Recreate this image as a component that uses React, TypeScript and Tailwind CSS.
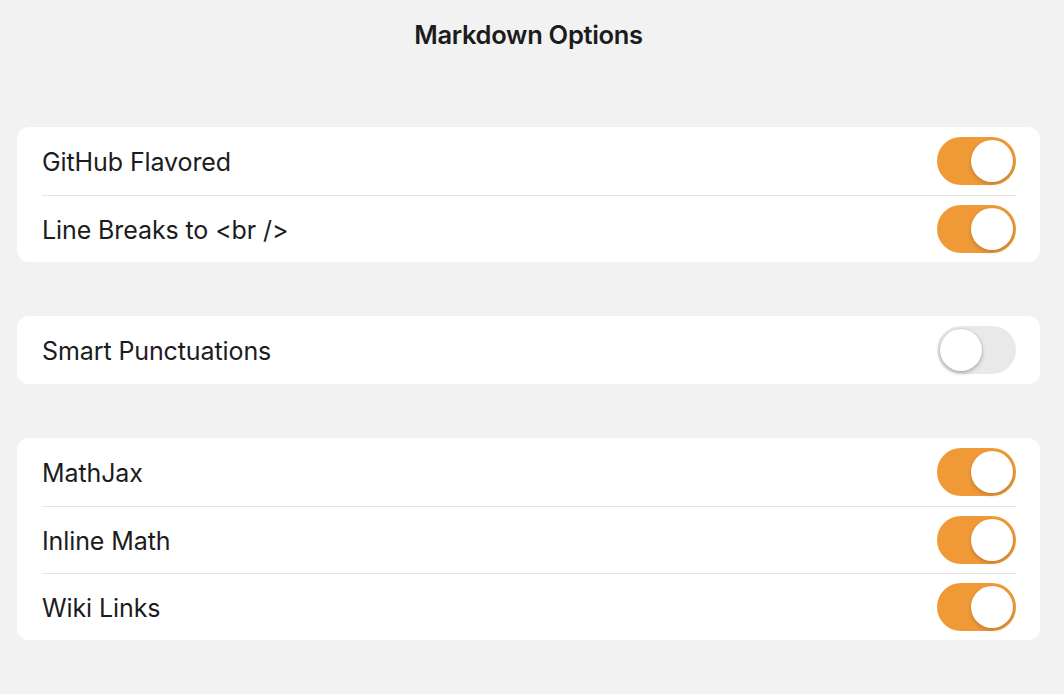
const groups = [
  [
    { label: "GitHub Flavored", on: true },
    { label: "Line Breaks to <br />", on: true },
  ],
  [{ label: "Smart Punctuations", on: false }],
  [
    { label: "MathJax", on: true },
    { label: "Inline Math", on: true },
    { label: "Wiki Links", on: true },
  ],
];

function Toggle({ on }: { on: boolean }) {
  return (
    <div
      className={
        on
          ? "relative h-[48px] w-[79px] rounded-full bg-[#f09a37]"
          : "relative h-[48px] w-[79px] rounded-full bg-[#e9e9ea]"
      }
    >
      <div
        className={
          on
            ? "absolute top-[3px] right-[3px] h-[42px] w-[42px] rounded-full bg-white shadow-[0_2px_4px_rgba(0,0,0,0.2)]"
            : "absolute top-[3px] left-[3px] h-[42px] w-[42px] rounded-full bg-white shadow-[0_2px_4px_rgba(0,0,0,0.25)] ring-1 ring-black/5"
        }
      />
    </div>
  );
}

export default function App() {
  return (
    <div
      className="min-h-screen bg-[#f2f2f2] pl-[17px] pr-[24px] pb-10 text-[#1c1c1e]"
      style={{ fontFamily: "Inter, 'Liberation Sans', sans-serif" }}
    >
      <h1 className="pt-[19px] text-center text-[25.5px] font-semibold leading-[32px] tracking-[-0.3px]">
        Markdown Options
      </h1>
      <div className="mt-[76px] flex flex-col gap-[54px]">
        {groups.map((rows, gi) => (
          <div key={gi} className="rounded-[12px] bg-white pl-[25px] pr-[24px]">
            {rows.map((r, i) => (
              <div
                key={r.label}
                className={
                  i > 0
                    ? "flex h-[67px] items-center justify-between border-t border-[#e5e5e5]"
                    : "flex h-[68px] items-center justify-between"
                }
              >
                <span className="pt-[2px] text-[25px] leading-none tracking-[-0.1px]">{r.label}</span>
                <Toggle on={r.on} />
              </div>
            ))}
          </div>
        ))}
      </div>
    </div>
  );
}
